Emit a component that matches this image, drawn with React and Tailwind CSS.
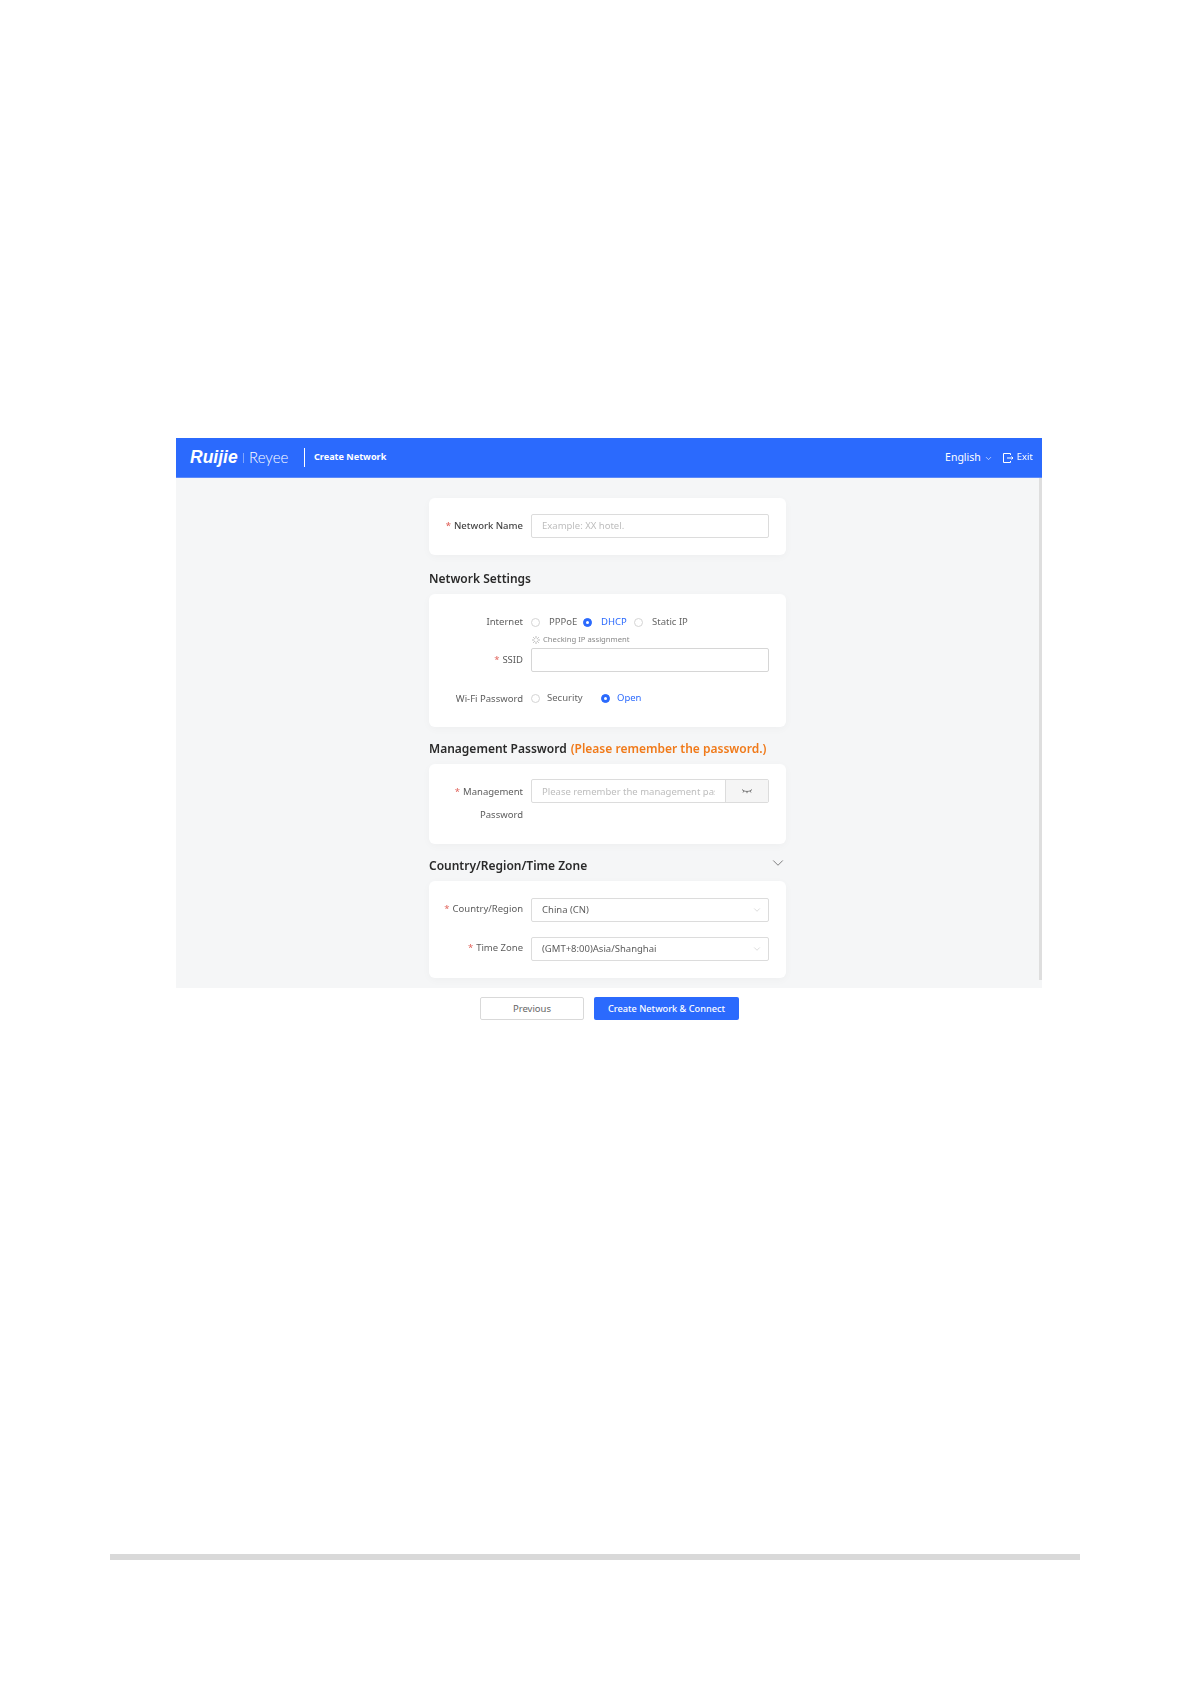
import React from 'react'
import { ChevronDown } from 'lucide-react'

const Label = ({ required, children, className = '' }) => (
  <div className={`w-[94px] shrink-0 text-right text-[9.5px] leading-[23px] text-[#5c5c5c] ${className}`}>
    {required && <span className="mr-[3px] text-[#e0625a]">*</span>}
    {children}
  </div>
)

const Radio = ({ checked, label, className = '' }) => (
  <span className={`flex items-center ${className}`}>
    <span className={`flex h-[9px] w-[9px] shrink-0 items-center justify-center rounded-full border ${checked ? 'border-[#2b6afd] bg-[#2b6afd]' : 'border-[#d4d4d4] bg-white'}`}>
      {checked && <span className="h-[3px] w-[3px] rounded-full bg-white" />}
    </span>
    <span className={`text-[9.5px] ${checked ? 'text-[#2b6afd]' : 'text-[#666]'}`}>{label}</span>
  </span>
)

const Select = ({ value, className = '' }) => (
  <div className={`flex h-[24px] w-[238px] items-center justify-between rounded-[2px] border border-[#dcdcdc] bg-white pl-[10px] pr-[6px] text-[9.5px] text-[#5c5c5c] ${className}`}>
    <span className="pt-px">{value}</span>
    <ChevronDown size={10} strokeWidth={1} className="text-[#aaa]" />
  </div>
)

const Card = ({ className = '', children }) => (
  <div className={`rounded-[6px] bg-white shadow-[0_2px_8px_rgba(0,0,0,0.03)] ${className}`}>{children}</div>
)

const Heading = ({ className = '', children }) => (
  <div className={`flex items-center text-[12px] font-semibold text-[#2a2a2a] ${className}`}>{children}</div>
)

export default function App() {
  return (
    <div className="min-h-[1684px] bg-white pt-[438px] font-['Noto_Sans',sans-serif]">
      {/* Embedded screenshot */}
      <div className="ml-[176px] w-[866px] blur-[0.3px]">
        <header className="flex h-10 items-center border-b border-[#5c8afa] bg-[#2b6afd] text-white">
          <span className="ml-[14px] w-[49px] font-['Liberation_Sans',sans-serif] text-[17.5px] font-bold italic leading-none">Ruijie</span>
          <span className="ml-[4px] h-[10px] w-px bg-[#7fa5fd]" />
          <span className="ml-[5px] w-[43px] font-['Lato',sans-serif] text-[15px] font-light leading-none">Reyee</span>
          <span className="ml-[12px] h-[19px] w-px bg-white" />
          <span className="ml-[9px] -mt-px text-[9.1px] font-bold">Create Network</span>
          <span className="ml-auto text-[10.5px]">English</span>
          <ChevronDown size={9} className="ml-[3px] mt-px text-[#dbe5fe]" />
          <svg width="12" height="12" viewBox="0 0 12 12" fill="none" stroke="white" strokeWidth="1" className="ml-[9px]">
            <path d="M8.5 3V1.5H1.5v9h7V9" />
            <path d="M5 6h6M9.5 4.5 11 6 9.5 7.5" />
          </svg>
          <span className="ml-[3px] mr-[9px] text-[9.5px]">Exit</span>
        </header>

        <div className="flex h-[510px] bg-[#f5f6f7]">
          <main className="ml-[253px] w-[357px]">
            <Card className="mt-5 flex h-[57px] items-start pt-4">
              <Label required className="font-medium text-[#444]">Network Name</Label>
              <div className="ml-2 flex h-[24px] w-[238px] items-center rounded-[2px] border border-[#dcdcdc] bg-white pl-[10px] pt-px text-[9.5px] text-[#bdbdbd]">Example: XX hotel.</div>
            </Card>

            <Heading className="h-[39px] pt-[9px]">Network Settings</Heading>
            <Card className="h-[133px] pt-5">
              <div className="flex h-4 items-center">
                <Label className="-mt-px">Internet</Label>
                <Radio label="PPPoE" className="ml-[8px] w-[52px] gap-[9px]" />
                <Radio checked label="DHCP" className="w-[51px] gap-[9px]" />
                <Radio label="Static IP" className="gap-[9px]" />
              </div>
              <div className="ml-[103px] mt-[5px] flex h-[10px] items-center gap-[3px] text-[7.7px] text-[#888]">
                <svg width="8" height="8" viewBox="0 0 8 8" stroke="#bbb" strokeWidth="1">
                  <path d="M4 0v2.4M4 5.6V8M0 4h2.4M5.6 4H8M1.2 1.2l1.6 1.6M5.2 5.2l1.6 1.6M6.8 1.2 5.2 2.8M2.8 5.2 1.2 6.8" />
                </svg>
                Checking IP assignment
              </div>
              <div className="mt-[3px] flex items-start">
                <Label required>SSID</Label>
                <div className="ml-2 h-[24px] w-[238px] rounded-[2px] border border-[#d6d6d6] bg-white" />
              </div>
              <div className="mt-[18px] flex h-4 items-center">
                <Label>Wi-Fi Password</Label>
                <Radio label="Security" className="ml-[8px] w-[70px] gap-[7px]" />
                <Radio checked label="Open" className="gap-[7px]" />
              </div>
            </Card>

            <Heading className="h-[37px] gap-1 pt-[6px]">
              Management Password
              <span className="text-[#f07a1a]">(Please remember the password.)</span>
            </Heading>
            <Card className="flex h-[80px] items-start pt-[15px]">
              <Label required className="pt-px">Management Password</Label>
              <div className="ml-2 flex h-[24px] w-[238px] rounded-[2px] border border-[#dcdcdc] bg-white">
                <div className="ml-[10px] mr-[10px] w-[173px] truncate pt-px text-[9.5px] leading-[22px] text-[#bdbdbd] [text-overflow:clip]">Please remember the management password</div>
                <div className="flex flex-1 items-center justify-center border-l border-[#dcdcdc] bg-[#f5f5f5]">
                  <svg width="12" height="6" viewBox="0 0 12 6" fill="none" stroke="#777" strokeWidth="1">
                    <path d="M1 1.5c2.5 2.6 7.5 2.6 10 0M3 3l-1 1.5M6 3.6v1.6M9 3l1 1.5" />
                  </svg>
                </div>
              </div>
            </Card>

            <Heading className="h-[37px] justify-between pt-[6px] text-[12.2px]">
              Country/Region/Time Zone
              <ChevronDown size={18} strokeWidth={1} className="-mr-[1px] -mt-[5px] text-[#555]" />
            </Heading>
            <Card className="h-[97px] pt-[17px]">
              <div className="flex items-start">
                <Label required className="-mt-[1px]">Country/Region</Label>
                <Select value="China (CN)" className="ml-2" />
              </div>
              <div className="mt-[15px] flex items-start">
                <Label required className="-mt-[1px]">Time Zone</Label>
                <Select value="(GMT+8:00)Asia/Shanghai" className="ml-2" />
              </div>
            </Card>
          </main>
          <div className="ml-auto h-[502px] w-[3px] bg-[#dedede]" />
        </div>

        <footer className="ml-[304px] mt-[9px] flex gap-[10px]">
          <button className="h-[23px] w-[104px] rounded-[2px] border border-[#d9d9d9] bg-white pt-px text-[9.5px] text-[#666]">Previous</button>
          <button className="h-[23px] w-[145px] rounded-[2px] bg-[#2b6afd] pt-px text-[9.2px] font-medium text-white">Create Network &amp; Connect</button>
        </footer>
      </div>

      {/* Page footer rule */}
      <div className="ml-[110px] mt-[534px] h-[6px] w-[970px] bg-[#d9d9d9]" />
    </div>
  )
}
